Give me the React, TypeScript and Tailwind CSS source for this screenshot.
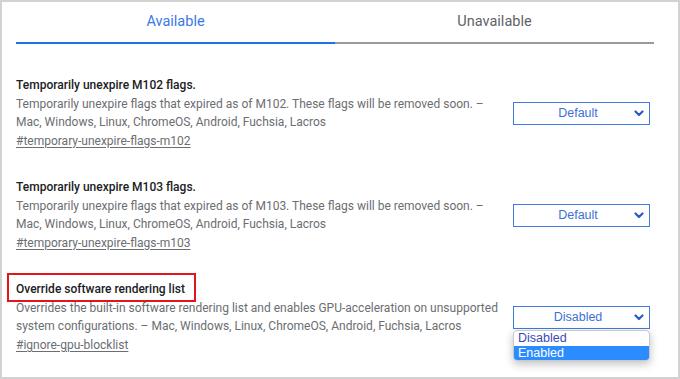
import React from "react";

const Chevron = () => (
  <svg width="10" height="7" viewBox="0 0 10 7" className="shrink-0">
    <polyline points="1.5,1.5 5,5 8.5,1.5" fill="none" stroke="#2a5bc4" strokeWidth="2.2" strokeLinecap="round" strokeLinejoin="round" />
  </svg>
);

function Select({ value }: { value: string }) {
  return (
    <div className="w-[137px] h-[23px] border border-[#3f7be0] bg-white flex items-center pl-[8px] pr-[5px] font-['Liberation_Sans',Arial,sans-serif] text-[12.5px] text-[#3d6fd6]">
      <span className="flex-1 text-center">{value}</span>
      <Chevron />
    </div>
  );
}

function Flag({
  title,
  lines,
  link,
  value,
  highlight,
  open,
}: {
  title: string;
  lines: string[];
  link: string;
  value: string;
  highlight?: boolean;
  open?: boolean;
}) {
  return (
    <div className="flex items-center justify-between">
      <div className="font-['Roboto',sans-serif] text-[12px] leading-[18.5px]">
        <div className="relative inline-block font-medium text-[#202124]">
          {title}
          {highlight && (
            <div className="absolute left-[-9px] top-[-7px] w-[189px] h-[29px] border-2 border-[#e0161c]" />
          )}
        </div>
        {lines.map((l, i) => (
          <div key={i} className="text-[#6b6e72] whitespace-nowrap">
            {l}
          </div>
        ))}
        <div className="text-[#6b6e72] underline underline-offset-2">{link}</div>
      </div>
      <div className="relative">
        <Select value={value} />
        {open && (
          <div className="absolute left-0 top-[24px] w-[137px] bg-white border border-[#c9c9c9] rounded-[4px] shadow-[0_3px_8px_rgba(0,0,0,0.25)] overflow-hidden font-['Liberation_Sans',Arial,sans-serif] text-[12.5px] leading-[15px] py-0">
            <div className="pl-[4px] text-[#3b4ab8] h-[15px]">Disabled</div>
            <div className="pl-[4px] bg-[#2b8cff] text-white h-[14px]">Enabled</div>
          </div>
        )}
      </div>
    </div>
  );
}

export default function App() {
  return (
    <div className="w-[680px] h-[379px] border-2 border-[#d2d2d2] bg-white overflow-hidden">
      <div className="ml-[14px] mr-[24px] flex h-[42px] font-['Roboto',sans-serif] text-[14.5px]">
        <div className="flex-1 flex items-center justify-center border-b-2 border-[#1a73e8] text-[#3b78e7]">
          Available
        </div>
        <div className="flex-1 flex items-center justify-center border-b-2 border-[#9a9a9a] text-[#5f6368]">
          Unavailable
        </div>
      </div>
      <div className="pl-[14px] pr-[28px] pt-[32px] flex flex-col gap-[28px]">
        <Flag
          title="Temporarily unexpire M102 flags."
          lines={[
            "Temporarily unexpire flags that expired as of M102. These flags will be removed soon. –",
            "Mac, Windows, Linux, ChromeOS, Android, Fuchsia, Lacros",
          ]}
          link="#temporary-unexpire-flags-m102"
          value="Default"
        />
        <Flag
          title="Temporarily unexpire M103 flags."
          lines={[
            "Temporarily unexpire flags that expired as of M103. These flags will be removed soon. –",
            "Mac, Windows, Linux, ChromeOS, Android, Fuchsia, Lacros",
          ]}
          link="#temporary-unexpire-flags-m103"
          value="Default"
        />
        <Flag
          title="Override software rendering list"
          lines={[
            "Overrides the built-in software rendering list and enables GPU-acceleration on unsupported",
            "system configurations. – Mac, Windows, Linux, ChromeOS, Android, Fuchsia, Lacros",
          ]}
          link="#ignore-gpu-blocklist"
          value="Disabled"
          highlight
          open
        />
      </div>
    </div>
  );
}
